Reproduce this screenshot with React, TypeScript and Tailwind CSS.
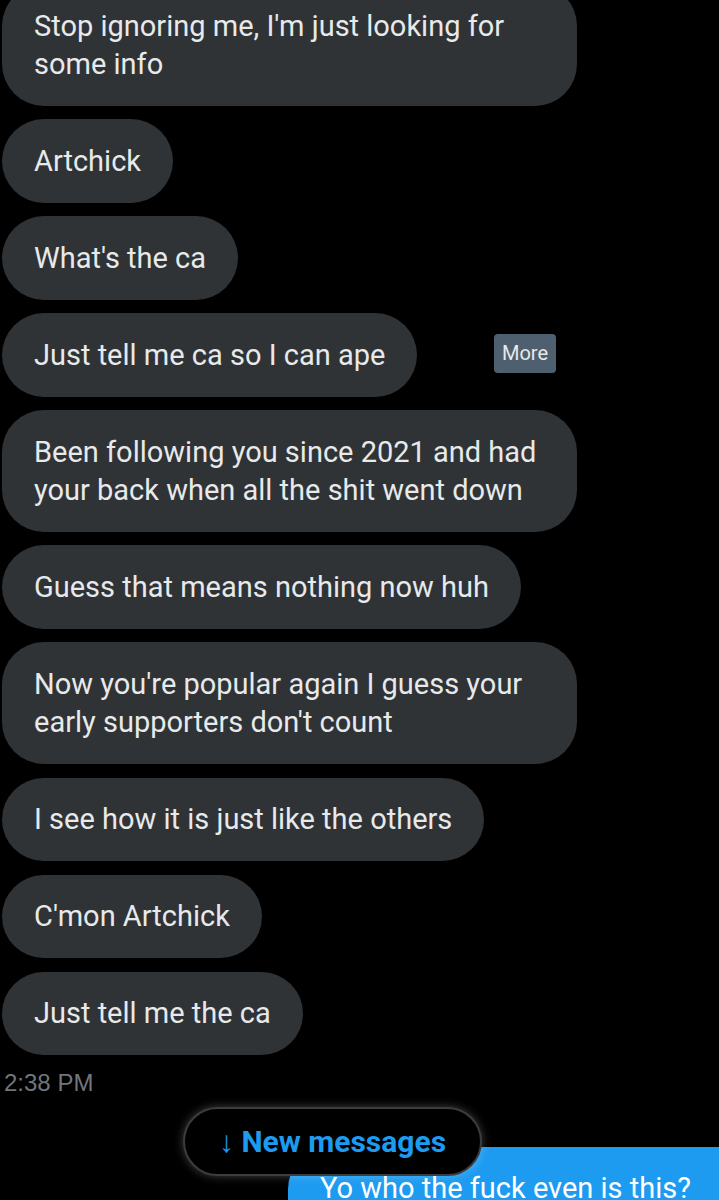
import { ReactNode } from "react";

const messages: { text: string; more?: boolean }[] = [
  { text: "Artchick" },
  { text: "What's the ca" },
  { text: "Just tell me ca so I can ape", more: true },
  { text: "Been following you since 2021 and had your back when all the shit went down" },
  { text: "Guess that means nothing now huh" },
  { text: "Now you're popular again I guess your early supporters don't count" },
  { text: "I see how it is just like the others" },
  { text: "C'mon Artchick" },
  { text: "Just tell me the ca" },
];

function Bubble({ children }: { children: ReactNode }) {
  return (
    <div className="w-fit max-w-[575px] rounded-[42px] bg-[#2f3336] px-[32px] py-[22.5px] text-[29px] leading-[38.5px] text-[#e7e9ea]">
      {children}
    </div>
  );
}

export default function App() {
  return (
    <div
      className="relative h-[1200px] w-[719px] overflow-hidden bg-black"
      style={{ fontFamily: "Roboto, 'Noto Sans', sans-serif" }}
    >
      <div className="flex flex-col gap-[13.4px] pl-[2px] -mt-[16px]">
        <Bubble>Stop ignoring me, I'm just looking for some info</Bubble>
        {messages.map((m) => (
          <div key={m.text} className="relative">
            <Bubble>{m.text}</Bubble>
            {m.more && (
              <span className="absolute left-[492px] top-[21px] rounded-[4px] bg-[#4e6070] px-[8px] py-[7px] text-[20px] leading-[25px] text-[#e7e9ea]">
                More
              </span>
            )}
          </div>
        ))}
      </div>

      <p
        className="mt-[14px] pl-[4px] text-[24px] leading-[28px] text-[#71767b]"
        style={{ fontFamily: "'Liberation Sans', Arial, sans-serif" }}
      >
        2:38 PM
      </p>

      <div className="mt-[50px] ml-[288px]">
        <div className="w-[460px] whitespace-nowrap rounded-tl-[42px] bg-[#1d9bf0] px-[32px] pt-[21px] text-[29px] leading-[40px] text-white">
          Yo who the fuck even is this?
        </div>
      </div>

      {/* new messages pill */}
      <div className="absolute left-[183px] top-[1107px] flex h-[69px] w-[299px] items-center justify-center rounded-full border-2 border-[#3a3d40] bg-black text-[30px] font-bold text-[#1d9bf0] shadow-[0_0_10px_rgba(255,255,255,0.25)]">
        ↓ New messages
      </div>
    </div>
  );
}
